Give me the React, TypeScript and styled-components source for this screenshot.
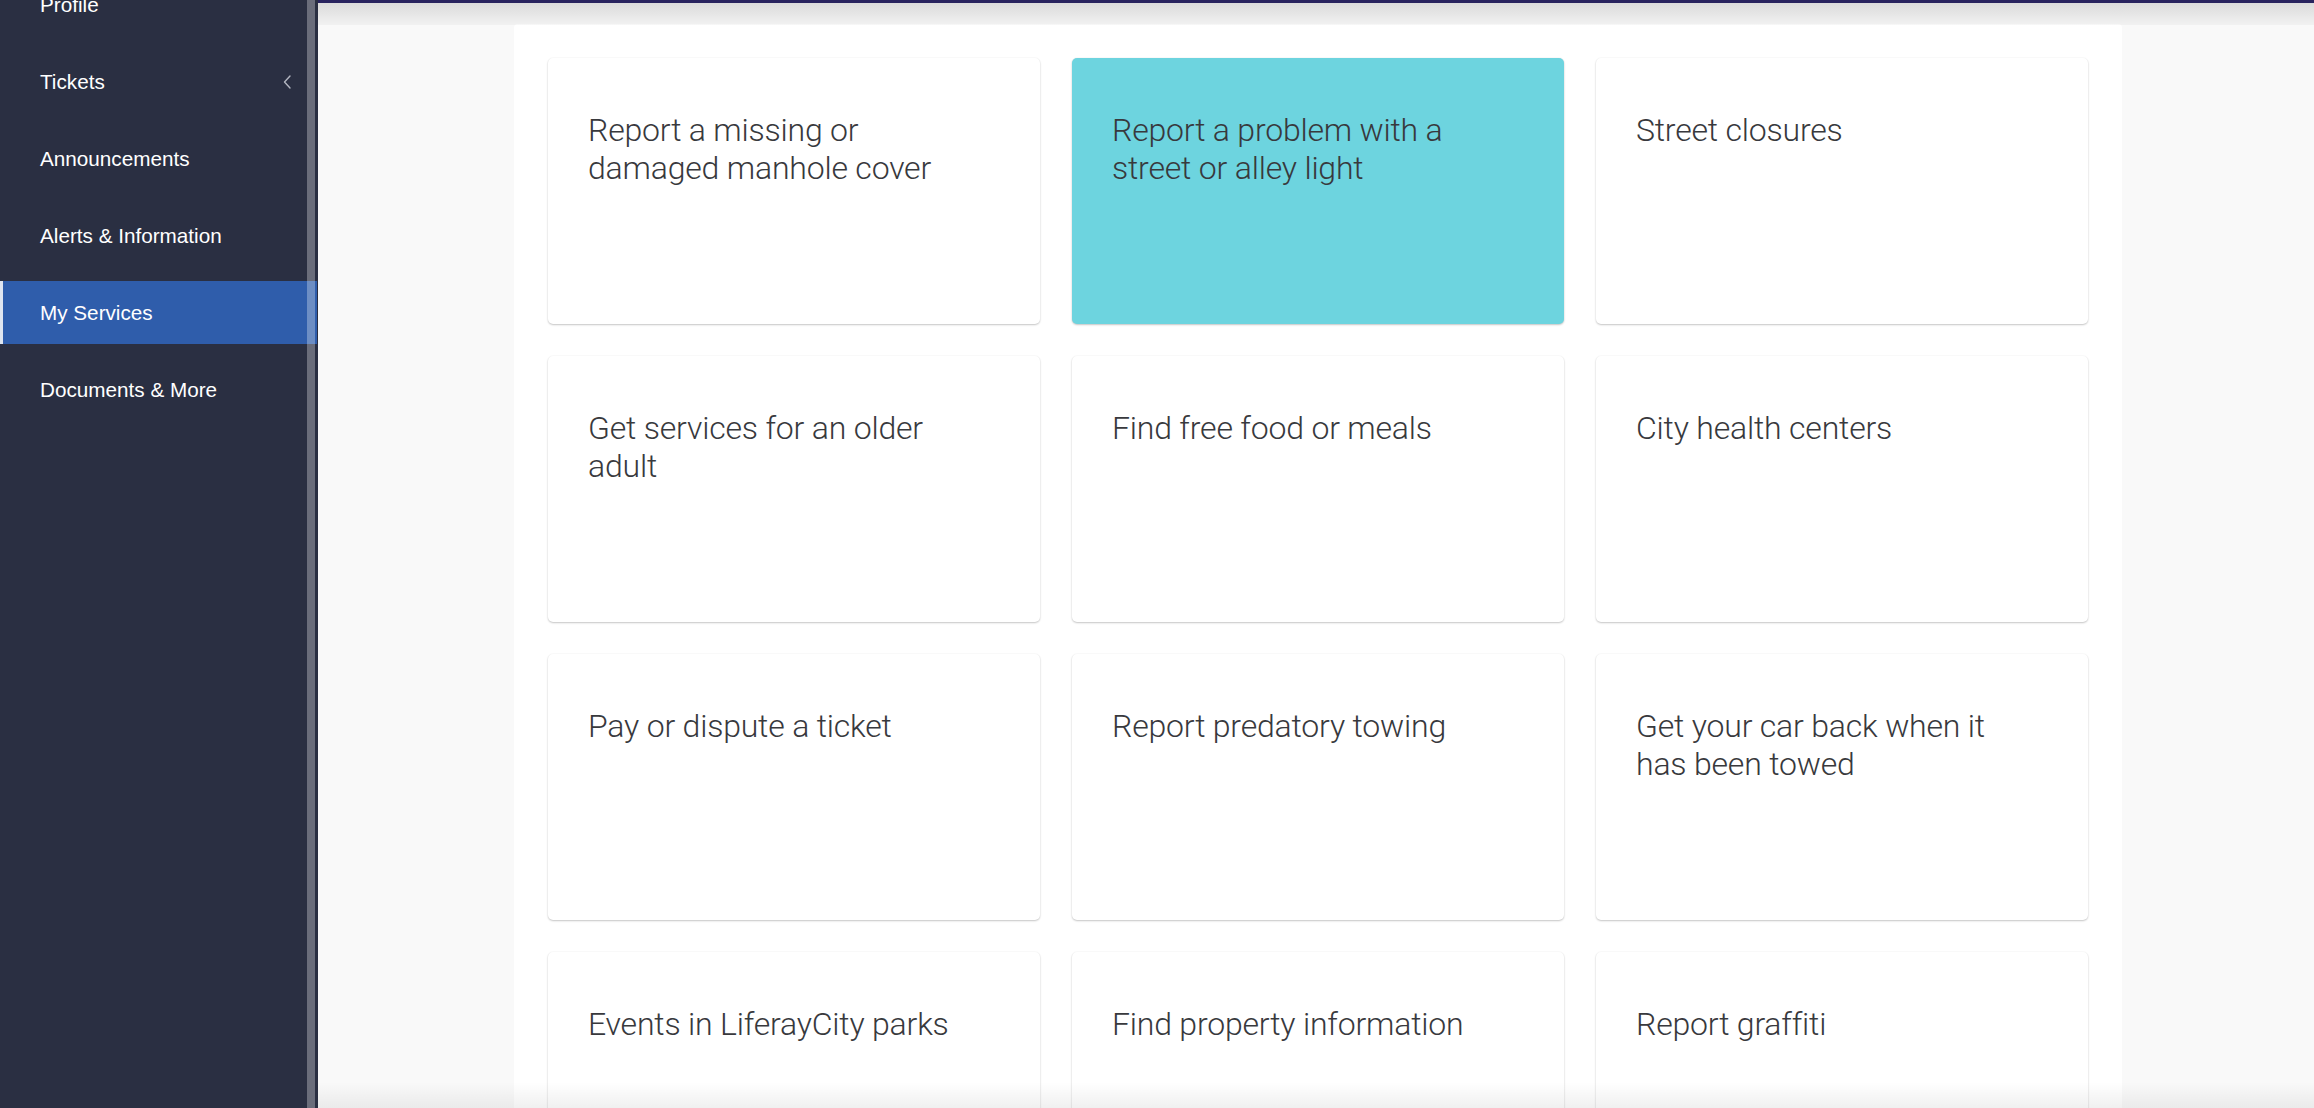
import React from 'react';
import styled, { createGlobalStyle } from 'styled-components';

const GlobalStyle = createGlobalStyle`
  html, body {
    margin: 0;
    padding: 0;
    height: 100%;
    overflow: hidden;
  }
  body {
    font-family: 'Liberation Sans', Arial, sans-serif;
    background: #f9f9f9;
  }
  * {
    box-sizing: border-box;
  }
`;

const AppCmpt = styled.div`
  display: flex;
  width: 100%;
  height: 100vh;
  overflow: hidden;
`;

const Sidebar = styled.aside`
  position: relative;
  flex: 0 0 318px;
  height: 100%;
  background-color: #2a2f42;
  overflow: hidden;
  /* scrollbar track laid over the menu */
  &::after {
    content: '';
    position: absolute;
    top: 0;
    bottom: 0;
    right: 3px;
    width: 8px;
    background-color: rgba(255, 255, 255, 0.3);
  }
`;

const NavList = styled.ul`
  list-style: none;
  margin: -27px 0 0 0;
  padding: 0;
  display: flex;
  flex-direction: column;
  gap: 14px;
`;

const NavItem = styled.li<{ $active?: boolean }>`
  display: flex;
  align-items: center;
  justify-content: space-between;
  width: 317px;
  height: 63px;
  padding: 0 26px 0 ${(p) => (p.$active ? '37px' : '40px')};
  font-size: 20.7px;
  color: #ffffff;
  background-color: ${(p) => (p.$active ? '#2f5dab' : 'transparent')};
  border-left: ${(p) => (p.$active ? '3px solid #dfe5f0' : '0')};
  cursor: pointer;
  .chevron {
    width: 8px;
    height: 14px;
  }
`;

const Main = styled.main`
  position: relative;
  flex: 1;
  height: 100%;
  padding-left: 4px;
  background-color: #f9f9f9;
  border-top: 3px solid #28235e;
  overflow: hidden;
  &::before {
    content: '';
    position: absolute;
    top: 0;
    left: 0;
    right: 0;
    height: 22px;
    background: linear-gradient(rgba(0, 0, 0, 0.12), rgba(0, 0, 0, 0.03));
  }
  &::after {
    content: '';
    position: absolute;
    left: 0;
    right: 0;
    bottom: 0;
    height: 26px;
    background: linear-gradient(rgba(0, 0, 0, 0), rgba(0, 0, 0, 0.06));
  }
`;

const ServicesPanel = styled.section`
  width: 1608px;
  margin: 21px auto 0;
  padding: 34px 34px;
  background-color: #ffffff;
  border-radius: 4px;
  display: grid;
  grid-template-columns: repeat(3, 492px);
  grid-auto-rows: 266px;
  column-gap: 32px;
  row-gap: 32px;
`;

const ServiceCard = styled.a<{ $highlight?: boolean }>`
  display: block;
  height: 266px;
  padding: 53px 67px 0 40px;
  border-radius: 5px;
  background-color: ${(p) => (p.$highlight ? '#6dd4df' : '#ffffff')};
  box-shadow: 0 1px 2px rgba(0, 0, 0, 0.22), 0 0 2px rgba(0, 0, 0, 0.06);
  text-decoration: none;
  color: #38393d;
  font-family: Roboto, 'Liberation Sans', sans-serif;
  font-weight: 300;
  font-size: 32px;
  line-height: 38px;
  letter-spacing: -0.2px;
  cursor: pointer;
`;

const menuItems = [
  { key: 'profile', text: 'Profile' },
  { key: 'tickets', text: 'Tickets', sub: true },
  { key: 'announcements', text: 'Announcements' },
  { key: 'alerts', text: 'Alerts & Information' },
  { key: 'services', text: 'My Services', active: true },
  { key: 'documents', text: 'Documents & More' },
];

const services = [
  { key: '1', text: 'Report a missing or damaged manhole cover' },
  { key: '2', text: 'Report a problem with a street or alley light', highlight: true },
  { key: '3', text: 'Street closures' },
  { key: '4', text: 'Get services for an older adult' },
  { key: '5', text: 'Find free food or meals' },
  { key: '6', text: 'City health centers' },
  { key: '7', text: 'Pay or dispute a ticket' },
  { key: '8', text: 'Report predatory towing' },
  { key: '9', text: 'Get your car back when it has been towed' },
  { key: '10', text: 'Events in LiferayCity parks' },
  { key: '11', text: 'Find property information' },
  { key: '12', text: 'Report graffiti' },
];

const App = () => {
  return (
    <AppCmpt>
      <GlobalStyle />
      <Sidebar>
        <NavList>
          {menuItems.map((item) => (
            <NavItem key={item.key} $active={item.active}>
              <span>{item.text}</span>
              {item.sub && (
                <svg className="chevron" viewBox="0 0 8 14" fill="none">
                  <polyline
                    points="7,1 1.5,7 7,13"
                    stroke="#b3b6c0"
                    strokeWidth="1.4"
                    strokeLinecap="round"
                    strokeLinejoin="round"
                  />
                </svg>
              )}
            </NavItem>
          ))}
        </NavList>
      </Sidebar>
      <Main>
        <ServicesPanel>
          {services.map((s) => (
            <ServiceCard key={s.key} $highlight={s.highlight}>
              {s.text}
            </ServiceCard>
          ))}
        </ServicesPanel>
      </Main>
    </AppCmpt>
  );
};

export default App;
